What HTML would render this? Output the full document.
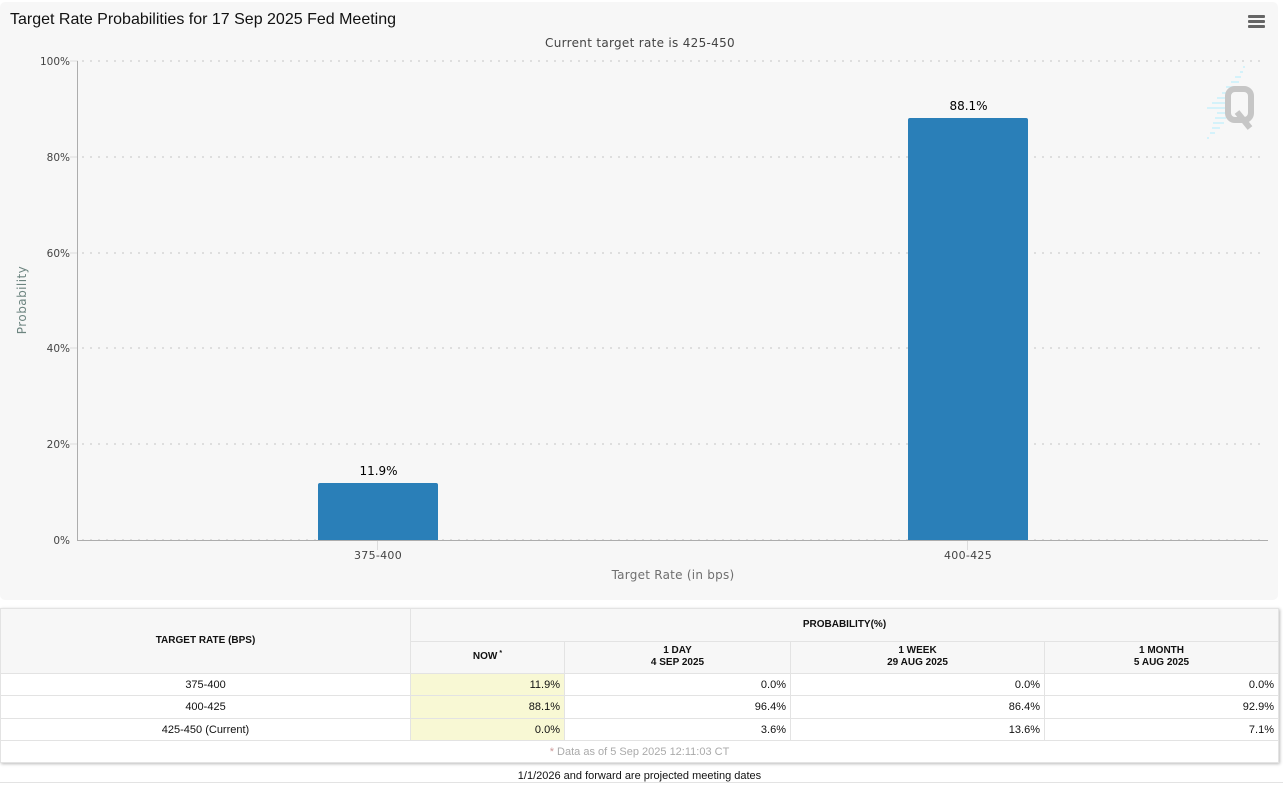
<!DOCTYPE html>
<html>
<head>
<meta charset="utf-8">
<style>
html,body{margin:0;padding:0;background:#fff;width:1283px;height:786px;overflow:hidden}
body{position:relative;font-family:"Liberation Sans",Arial,sans-serif}
#chart{position:absolute;left:0;top:2px;width:1278px;height:598px;background:#f7f7f7;border-radius:5px}
svg{position:absolute;left:0;top:0}
.d{font-family:"DejaVu Sans",sans-serif}
.l{position:absolute;background:#e3e3e3}
.t{position:absolute;font-size:11px;color:#111;line-height:12px;white-space:nowrap}
.c{text-align:center}
.r{text-align:right}
.b{font-weight:bold;font-size:10px;color:#111}
.f{position:absolute;background:#f7f7f7}
.y{position:absolute;background:#f8f8d4}
</style>
</head>
<body>
<div id="chart"></div>
<svg width="1283" height="600" viewBox="0 0 1283 600">
  <text x="10" y="24" font-family="Liberation Sans" font-size="16" fill="#111">Target Rate Probabilities for 17 Sep 2025 Fed Meeting</text>
  <text class="d" x="640" y="47" font-size="12" fill="#444" letter-spacing="0.3" text-anchor="middle">Current target rate is 425-450</text>
  <g fill="#666">
    <rect x="1248" y="15" width="17" height="3" rx="1"/>
    <rect x="1248" y="20" width="17" height="3" rx="1"/>
    <rect x="1248" y="25" width="17" height="3" rx="1"/>
  </g>
  <g stroke="#dedede" stroke-width="2" stroke-dasharray="2 6">
    <line x1="82" x2="1266" y1="61" y2="61"/>
    <line x1="82" x2="1266" y1="157" y2="157"/>
    <line x1="82" x2="1266" y1="253" y2="253"/>
    <line x1="82" x2="1266" y1="348" y2="348"/>
    <line x1="82" x2="1266" y1="444" y2="444"/>
    <line x1="82" x2="1266" y1="540" y2="540"/>
  </g>
  <g stroke="#dcdcdc">
    <line x1="70" x2="78" y1="61" y2="61"/>
    <line x1="70" x2="78" y1="157" y2="157"/>
    <line x1="70" x2="78" y1="253" y2="253"/>
    <line x1="70" x2="78" y1="348" y2="348"/>
    <line x1="70" x2="78" y1="444" y2="444"/>
    <line x1="377.500" x2="377.500" y1="541" y2="550"/>
    <line x1="967.500" x2="967.500" y1="541" y2="550"/>
  </g>
  <line x1="77.500" x2="77.500" y1="61" y2="541" stroke="#adadad"/>
  <line x1="78" x2="1268" y1="540.500" y2="540.500" stroke="#adadad"/>
  <g class="d" font-size="10.500" fill="#444" text-anchor="end">
    <text x="70" y="65">100%</text>
    <text x="70" y="161">80%</text>
    <text x="70" y="257">60%</text>
    <text x="70" y="352">40%</text>
    <text x="70" y="448">20%</text>
    <text x="70" y="544">0%</text>
  </g>
  <text class="d" transform="translate(26,300) rotate(-90)" font-size="12" fill="#6d8580" letter-spacing="0.45" text-anchor="middle">Probability</text>
  <path d="M318 540V485a2 2 0 0 1 2-2H436a2 2 0 0 1 2 2V540Z" fill="#2a7fb8"/>
  <path d="M908 540V120a2 2 0 0 1 2-2H1026a2 2 0 0 1 2 2V540Z" fill="#2a7fb8"/>
  <g class="d" font-size="12" fill="#000" text-anchor="middle">
    <text x="378.500" y="475">11.9%</text>
    <text x="968.500" y="110">88.1%</text>
  </g>
  <g class="d" font-size="11" fill="#444" letter-spacing="0.3" text-anchor="middle">
    <text x="378" y="559">375-400</text>
    <text x="968" y="559">400-425</text>
  </g>
  <text class="d" x="673" y="579" font-size="12" fill="#6f6f6f" letter-spacing="0.25" text-anchor="middle">Target Rate (in bps)</text>
  <g stroke="#d0f2fb" stroke-width="1.800">
    <line x1="1243" y1="67" x2="1245" y2="67"/>
    <line x1="1240" y1="72" x2="1243" y2="72"/>
    <line x1="1235" y1="77" x2="1241" y2="77"/>
    <line x1="1231" y1="82" x2="1239" y2="82"/>
    <line x1="1226" y1="87" x2="1237" y2="87"/>
    <line x1="1222" y1="93" x2="1232" y2="93"/>
    <line x1="1217" y1="98" x2="1226" y2="98"/>
    <line x1="1212" y1="103" x2="1226" y2="103"/>
    <line x1="1207" y1="108" x2="1226" y2="108"/>
    <line x1="1217" y1="113" x2="1226" y2="113"/>
    <line x1="1215" y1="118" x2="1226" y2="118"/>
    <line x1="1213" y1="123" x2="1224" y2="123"/>
    <line x1="1212" y1="128" x2="1220" y2="128"/>
    <line x1="1210" y1="133" x2="1215" y2="133"/>
    <line x1="1207" y1="138" x2="1209" y2="138"/>
  </g>
  <g fill="none" stroke="#c6c6c6">
    <rect x="1228" y="89" width="23" height="31" rx="7" stroke-width="6"/>
    <path d="M1237 112L1250 128" stroke-width="6"/>
  </g>
</svg>

<!-- table shell -->
<div style="position:absolute;left:0;top:608px;width:1279px;height:155px;background:#fff;box-shadow:1px 1px 3px #bbb"></div>
<div class="f" style="left:1px;top:609px;width:409px;height:64px"></div>
<div class="f" style="left:411px;top:609px;width:867px;height:64px"></div>
<div class="y" style="left:411px;top:674px;width:153px;height:66px"></div>

<div class="l" style="left:0;top:608px;width:1279px;height:1px"></div>
<div class="l" style="left:411px;top:641px;width:868px;height:1px"></div>
<div class="l" style="left:0;top:673px;width:1279px;height:1px"></div>
<div class="l" style="left:0;top:695px;width:1279px;height:1px"></div>
<div class="l" style="left:0;top:718px;width:1279px;height:1px"></div>
<div class="l" style="left:0;top:740px;width:1279px;height:1px"></div>
<div class="l" style="left:0;top:762px;width:1279px;height:1px"></div>
<div class="l" style="left:0;top:608px;width:1px;height:155px"></div>
<div class="l" style="left:1278px;top:608px;width:1px;height:155px"></div>
<div class="l" style="left:410px;top:608px;width:1px;height:132px"></div>
<div class="l" style="left:564px;top:641px;width:1px;height:99px"></div>
<div class="l" style="left:790px;top:641px;width:1px;height:99px"></div>
<div class="l" style="left:1044px;top:641px;width:1px;height:99px"></div>

<div class="t b c" style="left:1px;width:409px;top:635px">TARGET RATE (BPS)</div>
<div class="t b c" style="left:411px;width:867px;top:619px">PROBABILITY(%)</div>
<div class="t b c" style="left:411px;width:153px;top:651px">NOW<sup style="font-size:7px;line-height:0;margin-left:2px">*</sup></div>
<div class="t b c" style="left:565px;width:225px;top:645px">1 DAY<br>4 SEP 2025</div>
<div class="t b c" style="left:791px;width:253px;top:645px">1 WEEK<br>29 AUG 2025</div>
<div class="t b c" style="left:1045px;width:233px;top:645px">1 MONTH<br>5 AUG 2025</div>

<div class="t c" style="left:1px;width:409px;top:679px">375-400</div>
<div class="t c" style="left:1px;width:409px;top:701px">400-425</div>
<div class="t c" style="left:1px;width:409px;top:724px">425-450 (Current)</div>

<div class="t r" style="left:411px;width:149px;top:679px">11.9%</div>
<div class="t r" style="left:411px;width:149px;top:701px">88.1%</div>
<div class="t r" style="left:411px;width:149px;top:724px">0.0%</div>
<div class="t r" style="left:565px;width:221px;top:679px">0.0%</div>
<div class="t r" style="left:565px;width:221px;top:701px">96.4%</div>
<div class="t r" style="left:565px;width:221px;top:724px">3.6%</div>
<div class="t r" style="left:791px;width:249px;top:679px">0.0%</div>
<div class="t r" style="left:791px;width:249px;top:701px">86.4%</div>
<div class="t r" style="left:791px;width:249px;top:724px">13.6%</div>
<div class="t r" style="left:1045px;width:229px;top:679px">0.0%</div>
<div class="t r" style="left:1045px;width:229px;top:701px">92.9%</div>
<div class="t r" style="left:1045px;width:229px;top:724px">7.1%</div>

<div class="t c" style="left:1px;width:1277px;top:746px;color:#aaa"><span style="color:#c99">*</span> Data as of 5 Sep 2025 12:11:03 CT</div>
<div class="t c" style="left:0;width:1279px;top:770px;color:#111">1/1/2026 and forward are projected meeting dates</div>
<div class="l" style="left:0;top:782px;width:1283px;height:1px"></div>
</body>
</html>
